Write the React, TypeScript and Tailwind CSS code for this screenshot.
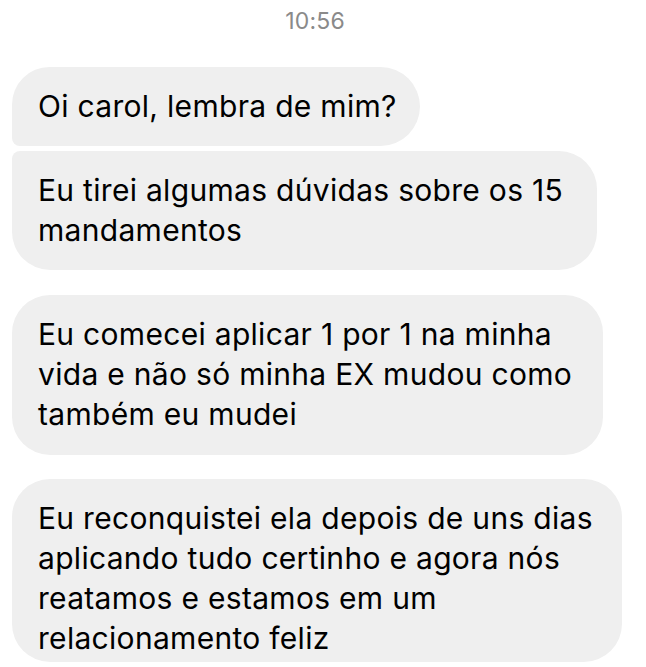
export default function App() {
  const font = { fontFamily: 'Inter, "Noto Sans", sans-serif' };
  return (
    <div className="w-[646px] h-[667px] overflow-hidden bg-white" style={font}>
      <div className="h-[52px] flex items-start justify-center pr-[16px] pt-[7px]">
        <span className="text-[23px] leading-[28px] text-[#8a8a8a] tracking-[0.2px]">10:56</span>
      </div>
      <div className="mt-[15px] px-[12px] flex flex-col items-start text-black text-[30px] leading-[40px] tracking-[0.3px]">
        <div className="w-[408px] h-[79px] bg-[#efefef] rounded-tl-[38px] rounded-tr-[40px] rounded-br-[40px] rounded-bl-[8px] pl-[26px] pt-[19px] whitespace-nowrap">
          Oi carol, lembra de mim?
        </div>
        <div className="mt-[5px] w-[585px] h-[119px] bg-[#efefef] rounded-tl-[8px] rounded-tr-[38px] rounded-br-[38px] rounded-bl-[38px] pl-[26px] pt-[19px] whitespace-nowrap">
          Eu tirei algumas dúvidas sobre os 15
          <br />
          mandamentos
        </div>
        <div className="mt-[25px] w-[591px] h-[160px] bg-[#efefef] rounded-[38px] pl-[26px] pt-[19px] whitespace-nowrap">
          Eu comecei aplicar 1 por 1 na minha
          <br />
          vida e não só minha EX mudou como
          <br />
          também eu mudei
        </div>
        <div className="mt-[24px] w-[610px] h-[183px] bg-[#efefef] rounded-[38px] pl-[26px] pt-[19px] whitespace-nowrap">
          Eu reconquistei ela depois de uns dias
          <br />
          aplicando tudo certinho e agora nós
          <br />
          reatamos e estamos em um
          <br />
          relacionamento feliz
        </div>
      </div>
    </div>
  );
}
